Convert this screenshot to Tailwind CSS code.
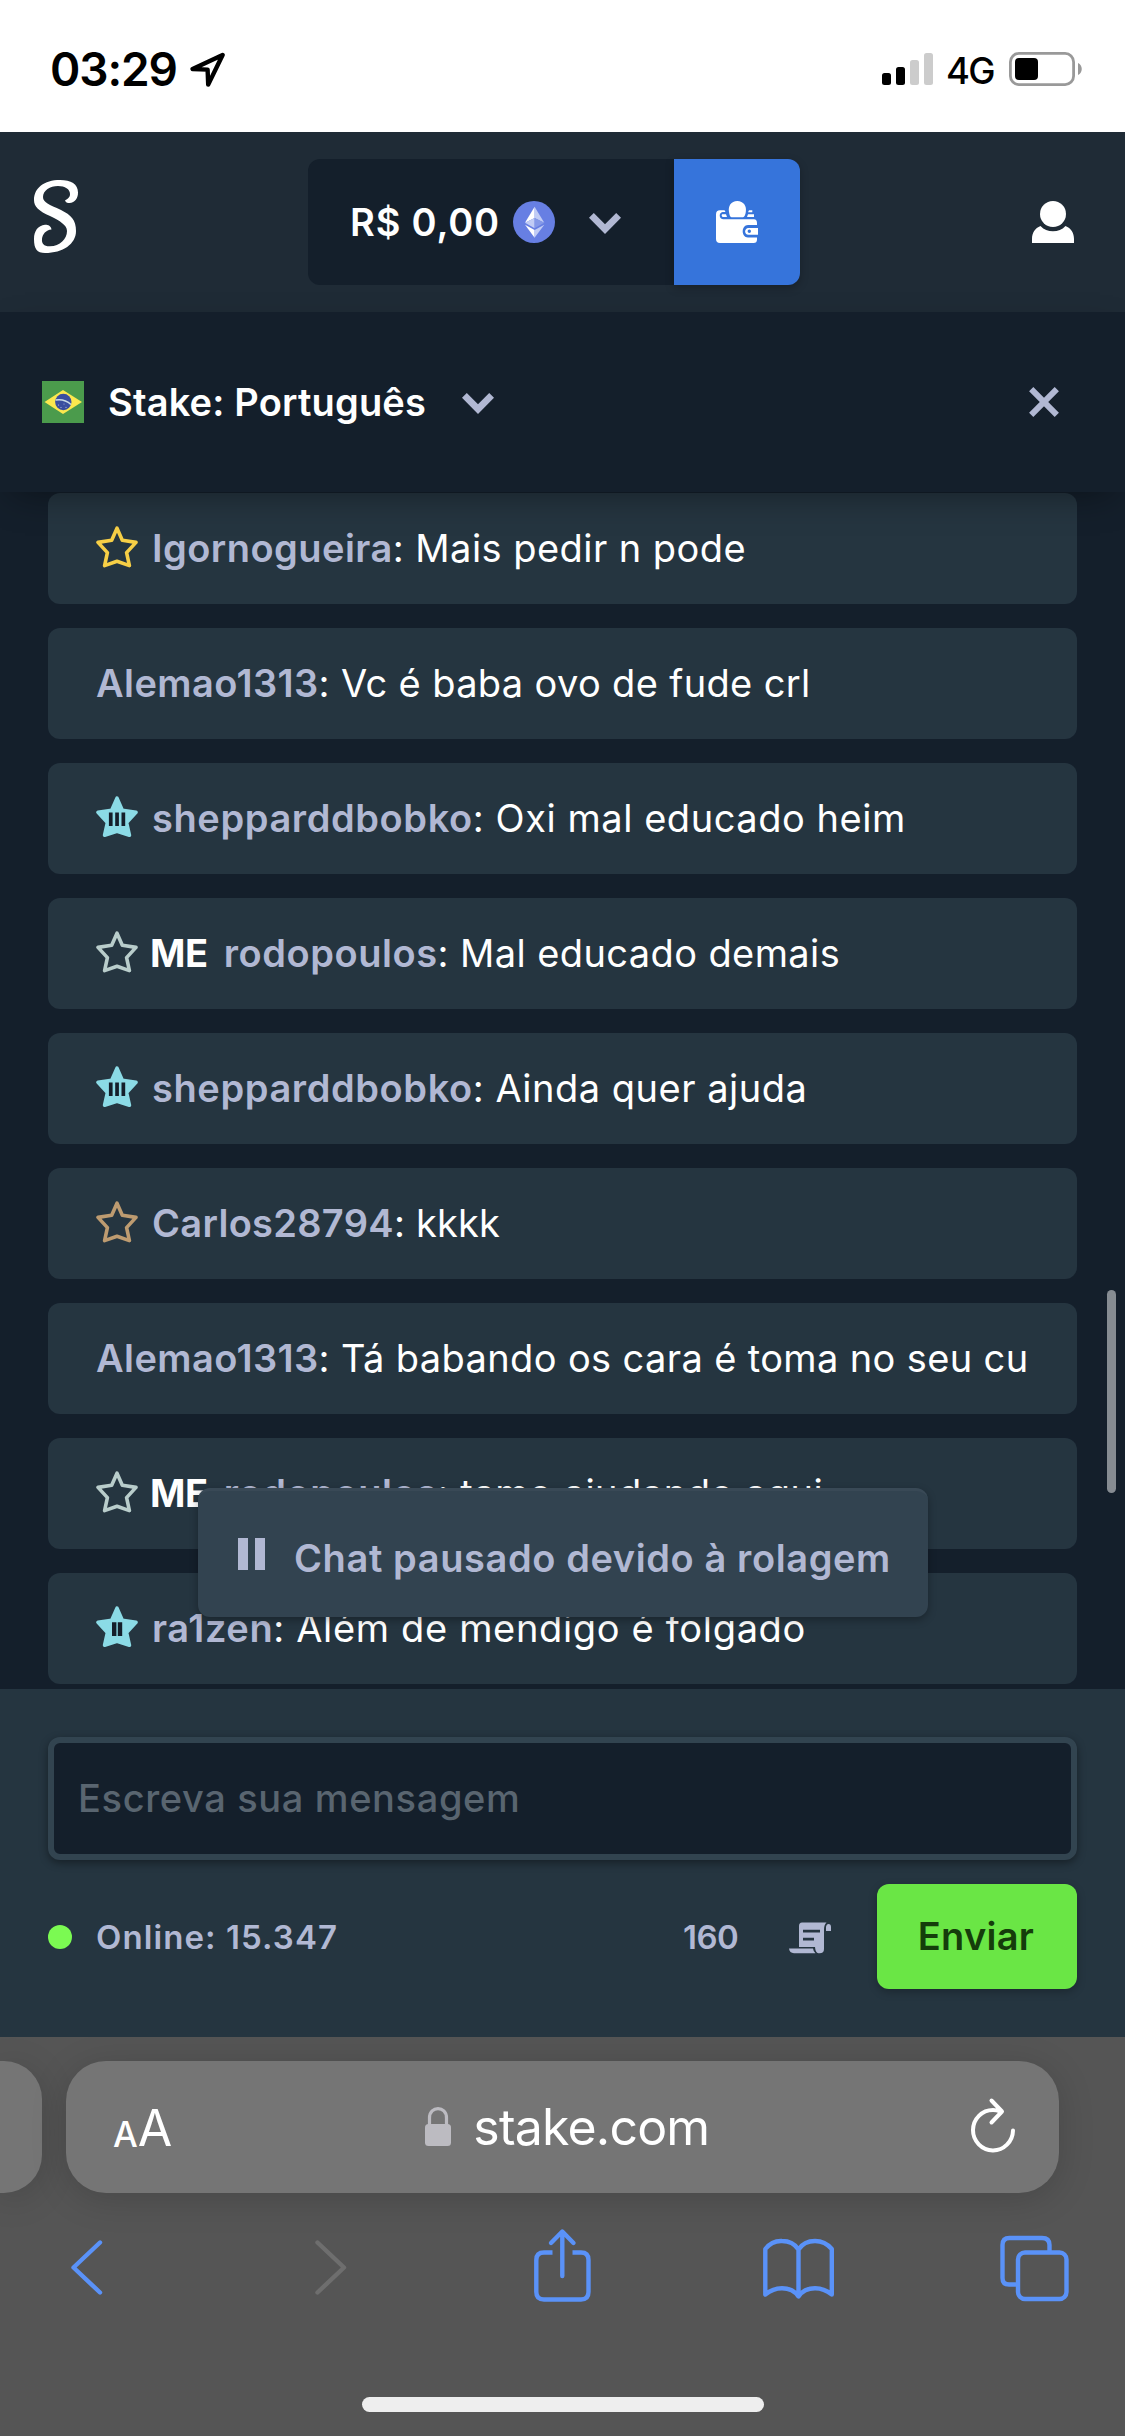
<!DOCTYPE html>
<html lang="pt">
<head>
<meta charset="utf-8">
<title>Stake</title>
<script src="https://cdn.jsdelivr.net/npm/@tailwindcss/browser@4"></script>
</head>
<body class="w-[1125px] h-[2436px] overflow-hidden bg-[#141f2b] font-['Inter',sans-serif] text-white">
<svg class="hidden">
  <symbol id="star" viewBox="0 0 42 42"><path d="M21 2.2 L26.3 14.2 L40 16.4 L30.6 26.6 L33.4 39.6 L21 35.2 L8.6 39.6 L11.4 26.6 L2 16.4 L15.7 14.2 Z" fill="none" stroke="currentColor" stroke-width="3.6" stroke-linejoin="round"/></symbol>
  <symbol id="starfill" viewBox="0 0 42 42"><path d="M21 2.2 L26.3 14.2 L40 16.4 L30.6 26.6 L33.4 39.2 L21 35.2 L8.6 39.2 L11.4 26.6 L2 16.4 L15.7 14.2 Z" fill="currentColor" stroke="currentColor" stroke-width="3.6" stroke-linejoin="round"/></symbol>
  <symbol id="chev" viewBox="0 0 32 21"><path d="M0 4.8 L4.8 0 L16 11.3 L27.2 0 L32 4.8 L16 21 Z" fill="#b1b8d3"/></symbol>
</svg>
<div class="flex h-full flex-col">
  <!-- Status bar -->
  <div class="flex h-[132px] shrink-0 items-start bg-white pl-[50px] text-black">
    <span class="mt-[41px] text-[46px] leading-[56px] font-semibold tracking-[-1.1px]">03:29</span>
    <svg class="mt-[52px] ml-[13px] h-[36px] w-[36px]" viewBox="0 0 36 36"><path d="M32.6 3 L2.6 17 L17.6 17.6 L18.2 32.6 Z" fill="none" stroke="#000" stroke-width="4.4" stroke-linejoin="round"/></svg>
    <div class="mr-[41px] ml-auto flex items-start">
      <svg class="mt-[52px] h-[34px] w-[52px]" viewBox="0 0 52 34"><rect y="21" width="9" height="12" rx="2.5"/><rect x="14" y="15" width="9" height="18" rx="2.5"/><rect x="28" y="8" width="9" height="25" rx="2.5" fill="#ccc"/><rect x="42" y="1" width="9" height="32" rx="2.5" fill="#ccc"/></svg>
      <span class="mt-[48px] ml-[12px] w-[63px] text-[36.5px] leading-[46px] font-medium tracking-[-1.8px]">4G</span>
      <svg class="mt-[52px] h-[34px] w-[75px]" viewBox="0 0 75 34"><rect x="1.4" y="1.4" width="63.2" height="31.2" rx="8.5" fill="none" stroke="#999" stroke-width="2.8"/><rect x="6" y="6" width="23" height="22" rx="4"/><path d="M69 11 C74 13 74 21 69 23Z" fill="#999"/></svg>
    </div>
  </div>
  <!-- Site header -->
  <header class="flex h-[180px] shrink-0 items-start bg-[#1f2b36]">
    <svg class="mt-[48px] ml-[34px] h-[73px] w-[44px]" viewBox="0 0 44 73"><path fill="#fff" d="M31 20.500 C32 23 34 23 35.500 23 C41 22.500 44 18.500 44 12.500 C44 4 37 0 26 0 C10 0 0 8 0 20 C0 27 5 31 16 36 C26 41 33 45 33 51 C33 59 26 66 16 66.300 C10 66.500 7.500 63.500 8 59 C8.500 54 12 50 17.500 49.500 C17 46 14 44.700 11 44.800 C4 45.500 0 51 0 59 C0 69 3 73 11 73 C29 73 42 64 42 51 C42 40 37 35 27 30 C15 24.500 9 22.500 9 17 C9 10.500 16 6 24 6 C31 6 36 9 36 14 C36 17.500 34 18.500 31 20.500 Z"/></svg>
    <div class="mt-[27px] ml-[230px] flex h-[126px] w-[366px] items-start justify-end rounded-l-xl bg-[#141f2b] pr-[53px]">
      <span class="mt-[39px] text-[38px] leading-[48px] font-semibold tracking-[0.8px] whitespace-nowrap">R$ 0,00</span>
      <svg class="mt-[42px] ml-[13px] h-[42px] w-[42px] shrink-0" viewBox="0 0 42 42"><circle cx="21" cy="21" r="21" fill="#677fe3"/><path d="M21.600 5.700 L12 21.700 L21.600 16.900Z" fill="#fff"/><path d="M21.600 5.700 L31.300 21.700 L21.600 16.900Z" fill="#c1ccf5"/><path d="M12 21.700 L21.600 16.900 V27.200Z" fill="#c1ccf5"/><path d="M31.300 21.700 L21.600 16.900 V27.200Z" fill="#8599e8"/><path d="M12 23.800 L21.600 29 V36.800Z" fill="#fff"/><path d="M31.300 23.800 L21.600 29 V36.800Z" fill="#c1ccf5"/></svg>
      <svg class="mt-[54px] ml-[34px] h-[21px] w-[32px] shrink-0"><use href="#chev"/></svg>
    </div>
    <div class="mt-[27px] flex h-[126px] w-[126px] items-center justify-center rounded-r-xl bg-[#3674db] shadow-[0_3px_9px_rgba(0,0,0,0.25)]">
      <svg class="h-[42px] w-[42px]" viewBox="0 0 42 42"><g fill="#fff"><path d="M4 9.300 H8.500 L9.500 11 H6.500 C3 11.500 2.500 17.500 7 18.300 H38 Q41 18.500 41 22 V24 H32 C25 24 25 36.500 32 36.500 H41 V38.500 Q41 42 37.500 42 H4 Q0 42 0 38 V13.300 Q0 9.300 4 9.300Z"/><path d="M6 13.200 H10 L11 16 H6.500 Q5 14.500 6 13.200Z M32 13.200 H38 V16 H31Z M33 9.200 H36.300 V11.200 H32Z M13 11 C12 5 15 0 21.300 0 C27.500 0 31 5 29.800 11 C29.500 13.500 28.500 16 27 16.200 H15.500 C14 16 13.300 13.500 13 11Z"/><path fill-rule="evenodd" d="M32.500 27 H42 V33.800 H32.500 C28 33.500 28 27.300 32.500 27Z M33.300 28.600 A1.700 1.700 0 1 0 33.300 32 A1.700 1.700 0 1 0 33.300 28.600Z"/></g></svg>
    </div>
    <svg class="mt-[69px] ml-[232px] h-[42px] w-[42px]" viewBox="0 0 42 42"><g fill="#fff"><ellipse cx="21" cy="13" rx="13" ry="13"/><path d="M0 42 V38 C0 32 3 27 8.500 25 C12 28.700 16 30.300 21 30.300 C26 30.300 30 28.700 33.500 25 C39 27 42 32 42 38 V42Z"/></g></svg>
  </header>
  <!-- Chat room bar -->
  <div class="relative z-10 flex h-[180px] shrink-0 items-start bg-[#141f2b] shadow-[0_12px_36px_-12px_rgba(0,0,0,0.45)]">
    <svg class="mt-[69px] ml-[42px] h-[42px] w-[42px]" viewBox="0 0 42 42"><rect width="42" height="42" fill="#4b9b4c"/><path d="M2.500 21 L21 9 L40 21 L21 33Z" fill="#fbe84e"/><circle cx="21.300" cy="21" r="8.200" fill="#3a4e9f"/><path d="M13.600 19 Q22.500 17.500 29 23.500" stroke="#c9dbe6" stroke-width="1.600" fill="none"/><g fill="#b7c3e2"><circle cx="16.500" cy="24" r=".6"/><circle cx="19" cy="26.500" r=".6"/><circle cx="24" cy="26.300" r=".6"/><circle cx="22" cy="23" r=".5"/></g></svg>
    <span class="mt-[66px] ml-6 w-[354px] text-[38px] leading-[48px] font-semibold tracking-[0.17px]">Stake: Português</span>
    <svg class="mt-[81px] h-[21px] w-[32px]"><use href="#chev"/></svg>
    <svg class="mt-[75px] mr-[66px] ml-auto h-[30px] w-[30px]" viewBox="0 0 30 30"><path d="M2.200 2.200 L27.800 27.800 M27.800 2.200 L2.200 27.800" stroke="#b1b8d3" stroke-width="6"/></svg>
  </div>
  <!-- Messages -->
  <main class="relative flex h-[1197px] shrink-0 flex-col gap-6 px-12 pt-px text-[38px] leading-[48px]">
    <div class="flex h-[111px] shrink-0 items-start rounded-xl bg-[#253540] pt-[31px] pl-12 whitespace-pre"><svg class="mt-0.5 mr-[14px] h-[42px] w-[42px] shrink-0 text-[#f7cf46]"><use href="#star"/></svg><b class="font-semibold tracking-[0.46px] text-[#b1b8d3]">Igornogueira</b><span class="tracking-[0.45px]">: Mais pedir n pode</span></div>
    <div class="flex h-[111px] shrink-0 items-start rounded-xl bg-[#253540] pt-[31px] pl-12 whitespace-pre"><b class="font-semibold tracking-[0.41px] text-[#b1b8d3]">Alemao1313</b><span class="tracking-[0.35px]">: Vc é baba ovo de fude crl</span></div>
    <div class="flex h-[111px] shrink-0 items-start rounded-xl bg-[#253540] pt-[31px] pl-12 whitespace-pre"><svg class="mt-0.5 mr-[14px] h-[42px] w-[42px] shrink-0 text-[#8bdbe6]" viewBox="0 0 42 42"><use href="#starfill"/><path d="M12.900 16.500h3.700v13.500h-3.700z M19.200 16.500h3.700v13.500h-3.700z M25.500 16.500h3.700v13.500h-3.700z" fill="#141f2b"/></svg><b class="font-semibold tracking-[0.6px] text-[#b1b8d3]">shepparddbobko</b><span class="tracking-[0.55px]">: Oxi mal educado heim</span></div>
    <div class="flex h-[111px] shrink-0 items-start rounded-xl bg-[#253540] pt-[31px] pl-12 whitespace-pre"><svg class="mt-0.5 mr-[12px] h-[42px] w-[42px] shrink-0 text-[#b9cdcb]"><use href="#star"/></svg><b class="mr-4 font-bold tracking-[-0.4px]">ME</b><b class="font-semibold tracking-[0.56px] text-[#b1b8d3]">rodopoulos</b><span class="tracking-[0.4px]">: Mal educado demais</span></div>
    <div class="flex h-[111px] shrink-0 items-start rounded-xl bg-[#253540] pt-[31px] pl-12 whitespace-pre"><svg class="mt-0.5 mr-[14px] h-[42px] w-[42px] shrink-0 text-[#8bdbe6]" viewBox="0 0 42 42"><use href="#starfill"/><path d="M12.900 16.500h3.700v13.500h-3.700z M19.200 16.500h3.700v13.500h-3.700z M25.500 16.500h3.700v13.500h-3.700z" fill="#141f2b"/></svg><b class="font-semibold tracking-[0.6px] text-[#b1b8d3]">shepparddbobko</b><span class="tracking-[0.5px]">: Ainda quer ajuda</span></div>
    <div class="flex h-[111px] shrink-0 items-start rounded-xl bg-[#253540] pt-[31px] pl-12 whitespace-pre"><svg class="mt-0.5 mr-[14px] h-[42px] w-[42px] shrink-0 text-[#bd9b70]"><use href="#star"/></svg><b class="font-semibold tracking-[0.3px] text-[#b1b8d3]">Carlos28794</b><span class="tracking-[0.2px]">: kkkk</span></div>
    <div class="flex h-[111px] shrink-0 items-start rounded-xl bg-[#253540] pt-[31px] pl-12 whitespace-pre"><b class="font-semibold tracking-[0.41px] text-[#b1b8d3]">Alemao1313</b><span class="tracking-[0.37px]">: Tá babando os cara é toma no seu cu</span></div>
    <div class="flex h-[111px] shrink-0 items-start rounded-xl bg-[#253540] pt-[31px] pl-12 whitespace-pre"><svg class="mt-0.5 mr-[12px] h-[42px] w-[42px] shrink-0 text-[#b9cdcb]"><use href="#star"/></svg><b class="mr-4 font-bold tracking-[-0.4px]">ME</b><b class="font-semibold tracking-[0.56px] text-[#b1b8d3]">rodopoulos</b><span class="tracking-[0.51px]">: tamo ajudando aqui</span></div>
    <div class="flex h-[111px] shrink-0 items-start rounded-xl bg-[#253540] pt-[31px] pl-12 whitespace-pre"><svg class="mt-0.5 mr-[14px] h-[42px] w-[42px] shrink-0 text-[#8bdbe6]" viewBox="0 0 42 42"><use href="#starfill"/><path d="M16 16.200h4.400v13.700h-4.400z M21.800 16.200h4.400v13.700h-4.400z" fill="#141f2b"/></svg><b class="font-semibold tracking-[0.6px] text-[#b1b8d3]">ra1zen</b><span class="tracking-[0.66px]">: Além de mendigo é folgado</span></div>
    <div class="absolute top-[996px] left-[198px] flex h-[129px] w-[730px] items-start rounded-xl border-t-[3px] border-[#394956] bg-[#324350] shadow-[0_3px_9px_rgba(0,0,0,0.3)]">
      <svg class="mt-[47px] ml-[40px] h-[32px] w-[27px]"><path d="M0 0h10v32h-10z M17 0h10v32h-10z" fill="#b1b8d3"/></svg>
      <span class="mt-[43px] ml-[29px] font-semibold tracking-[0.6px] whitespace-pre text-[#b1b8d3]">Chat pausado devido à rolagem</span>
    </div>
    <div class="absolute top-[798px] left-[1107px] h-[203px] w-[9px] rounded-full bg-[#868c92]"></div>
  </main>
  <!-- Composer -->
  <footer class="flex h-[348px] shrink-0 flex-col bg-[#253540] px-12 pt-12">
    <div class="flex h-[123px] items-start rounded-xl border-[6px] border-[#324450] bg-[#141f2b] pl-6 text-[38px] leading-[48px] shadow-[0_3px_9px_rgba(0,0,0,0.4)]">
      <span class="mt-[31px] font-medium tracking-[0.63px] whitespace-pre text-[#596570]">Escreva sua mensagem</span>
    </div>
    <div class="mt-6 flex h-[105px] items-start text-[33px] leading-[42px] font-semibold text-[#b1b8d3]">
      <div class="mt-[41px] h-6 w-6 rounded-full bg-[#7bfa52]"></div>
      <span class="mt-[32px] ml-6 tracking-[1.08px] whitespace-pre">Online: 15.347</span>
      <span class="mt-[32px] ml-auto w-[106px] tracking-[-0.5px]">160</span>
      <svg class="mt-[38px] h-[32px] w-[42px]" viewBox="0 0 42 32"><path fill-rule="evenodd" fill="#b1b8d3" d="M13 .5 H37.500 C35.500 2.500 35 4.500 35 8 V27 C35 30 33.500 31.300 30.500 31.300 C27.500 31.300 26.500 29.500 26 25 H10 V4 Q10 .5 13 .5Z M14 7.700V10.500H31V7.700Z M14 15.700V18.500H25V15.700Z M0 26.500 H24 Q24.500 30 26.500 31.200 H5 Q.5 31 0 26.500Z M37 9 V5 Q37.500 2 39.500 2 Q42 2 42 5 V9Z"/></svg>
      <div class="ml-[46px] flex h-[105px] w-[200px] items-start justify-center rounded-xl bg-[#6ae645] pr-0.5 text-[38px] leading-[48px] text-[#153d0b] shadow-[0_3px_9px_rgba(0,0,0,0.25)]"><span class="mt-[28px] tracking-[0.26px]">Enviar</span></div>
    </div>
  </footer>
  <!-- Browser toolbar -->
  <div class="flex h-[399px] shrink-0 flex-col overflow-hidden bg-[#555555] pt-6">
    <div class="flex h-[132px] shrink-0">
      <div class="h-[132px] w-[42px] rounded-r-[38px] bg-[#757575] shadow-[0_6px_36px_rgba(0,0,0,0.16)]"></div>
      <div class="ml-6 flex h-[132px] w-[993px] items-start rounded-[40px] bg-[#757575] pl-[47px] shadow-[0_6px_36px_rgba(0,0,0,0.16)]">
        <span class="mt-[43px] text-[35px] leading-[60px] font-medium">A</span>
        <span class="mt-[37px] text-[50px] leading-[60px]">A</span>
        <svg class="mt-[46px] ml-[253px] h-[39px] w-[26px]" viewBox="0 0 26 39"><rect y="17" width="26" height="22" rx="3.500" fill="#bcbbc1"/><path d="M4.500 18 V11 C4.500 -1.500 21.500 -1.500 21.500 11 V18" fill="none" stroke="#bcbbc1" stroke-width="3.200"/></svg>
        <span class="mt-[36px] ml-[22px] text-[50px] leading-[60px] tracking-[-0.81px]">stake.com</span>
        <svg class="mt-[36px] mr-[43px] ml-auto h-[56px] w-[46px]" viewBox="0 0 46 56"><path d="M30 14.500 Q26.500 13 23 13 A20 20.200 0 1 0 43 33.500 M21.500 3.500 L32 14.500 L21.500 25.500" fill="none" stroke="#fff" stroke-width="4" stroke-linecap="round" stroke-linejoin="round"/></svg>
      </div>
    </div>
    <div class="flex h-[204px] shrink-0 pt-[34px] pl-[69px]">
      <svg class="h-[80px] w-[1020px]" viewBox="0 0 1020 80" fill="none" stroke="#5a92f8" stroke-width="4.400" stroke-linecap="round" stroke-linejoin="round"><path d="M31 15.500 L4.500 40.500 L31 65.500"/><path d="M248.500 15.500 L275 40.500 L248.500 65.500" stroke="#6e6e6e"/><path d="M483.500 25.500 H475 Q467.300 25.500 467.300 33 V65 Q467.300 72.500 475 72.500 H512 Q519.500 72.500 519.500 65 V33 Q519.500 25.500 512 25.500 H503.500" stroke-linecap="butt"/><path d="M493.300 49 V5.500 M482 16 L493.300 4.500 L504.500 16"/><path transform="translate(-33,0)" d="M729.300 22 Q736 13.500 746 14 Q757 14 762.500 22.500 Q768 14 779 14 Q789 14 795.800 22 V67.500 Q788 61.300 779 61.300 Q768 61.300 762.500 69.500 Q757 61.300 746 61.300 Q737 61.300 729.300 67.500 Z M762.500 22 V69"/><path d="M946.500 57.500 H940 Q933.500 57.500 933.500 51 V18 Q933.500 11 940.500 11 H973 Q980.500 11 980.500 18 V24"/><rect x="949" y="25.500" width="48.500" height="46.500" rx="7"/></svg>
    </div>
    <div class="mx-auto h-[15px] w-[402px] shrink-0 rounded-full bg-[#eeeeee]"></div>
  </div>
</div>
</body>
</html>
